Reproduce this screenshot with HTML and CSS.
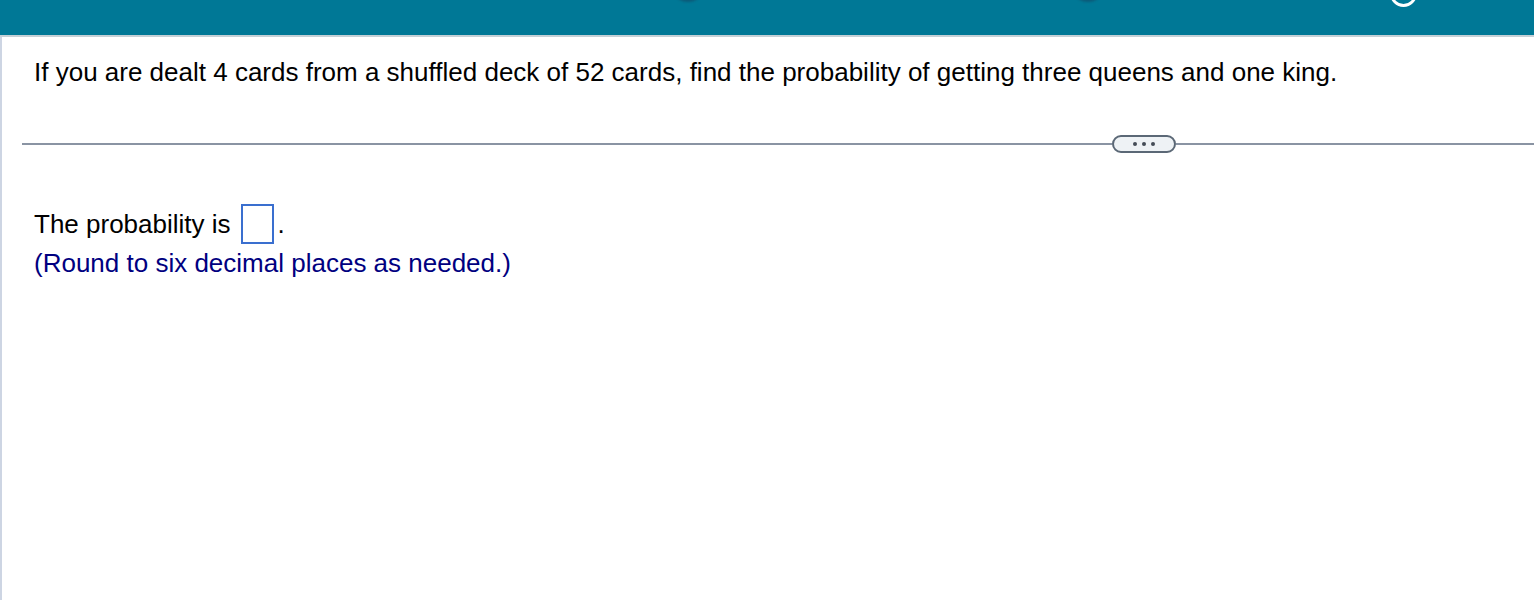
FILE: index.html
```html
<!DOCTYPE html>
<html lang="en">
<head>
  <meta charset="UTF-8">
  <title>Question</title>
  <link rel="stylesheet" href="styles.css">
</head>
<body>
  <header class="topbar">
    <span class="blob blob-a"></span>
    <span class="blob blob-b"></span>
    <span class="ring"></span>
  </header>

  <main class="question">
    <p class="stem">If you are dealt 4 cards from a shuffled deck of 52 cards, find the probability of getting three queens and one king.</p>

    <div class="divider">
      <button class="more"><span></span><span></span><span></span></button>
    </div>

    <div class="answer">
      <p class="line">The probability is <span class="blank"></span>.</p>
      <p class="hint">(Round to six decimal places as needed.)</p>
    </div>
  </main>
</body>
</html>
```

FILE: styles.css
```css
body {
  margin: 0;
  font-family: "Liberation Sans", Arial, sans-serif;
  background-color: #fff;
  color: #000;
  overflow: hidden;
  height: 600px;
}
.topbar {
  position: relative;
  height: 35px;
  background-color: #007896;
  border-bottom: 2px solid #c5d0d6;
  overflow: hidden;
}
.blob {
  position: absolute;
  top: -14px;
  width: 24px;
  height: 16px;
  border-radius: 50%;
  background-color: #0c5a78;
  filter: blur(1px);
}
.blob-a { left: 676px; }
.blob-b { left: 1076px; }
.ring {
  position: absolute;
  left: 1390px;
  top: -20px;
  width: 21px;
  height: 21px;
  border: 3px solid #fff;
  border-radius: 50%;
}
.question {
  border-left: 2px solid #cdd5e3;
  height: 563px;
  padding: 0 0 0 20px;
}
.stem {
  margin: 0;
  padding: 20px 0 0 12px;
  font-size: 26px;
  line-height: 30px;
}
.divider {
  display: flex;
  align-items: center;
  margin-top: 48px;
  height: 18px;
}
.divider::before,
.divider::after {
  content: "";
  height: 2px;
  background-color: #8a94a3;
}
.divider::before { width: 1090px; }
.divider::after { flex: 1; }
.more {
  display: flex;
  gap: 5px;
  justify-content: center;
  align-items: center;
  width: 64px;
  height: 18px;
  padding: 0;
  border: 2px solid #5b6876;
  border-radius: 9px;
  background-color: #eef2f5;
}
.more span {
  width: 4px;
  height: 4px;
  border-radius: 50%;
  background-color: #444c56;
}
.answer {
  padding: 51px 0 0 12px;
}
.line {
  margin: 0;
  font-size: 26px;
  line-height: 40px;
  display: flex;
  align-items: center;
}
.blank {
  display: inline-block;
  width: 29px;
  height: 36px;
  border: 2px solid #3a6fcf;
  margin: 0 4px 0 10px;
}
.hint {
  margin: 4px 0 0;
  font-size: 26px;
  line-height: 30px;
  color: #000080;
}
```
